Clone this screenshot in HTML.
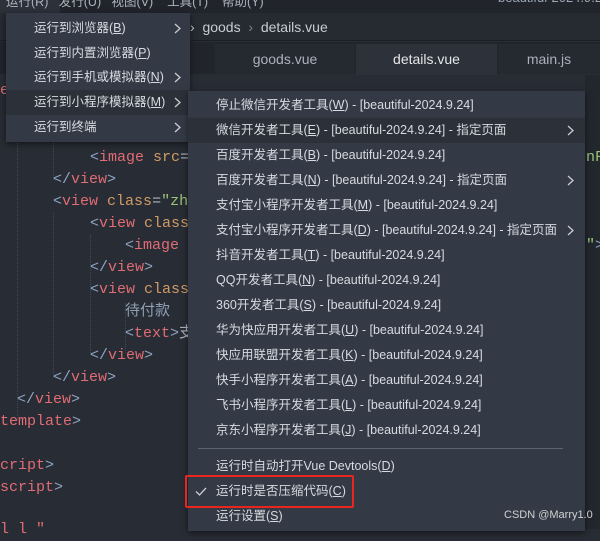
<!DOCTYPE html>
<html><head><meta charset="utf-8"><style>
*{margin:0;padding:0;box-sizing:border-box}
body{width:600px;height:529px;overflow:hidden;background:#282c34;position:relative;font-family:"Liberation Sans","Noto Sans CJK SC",sans-serif;}
.abs{position:absolute;white-space:nowrap}
.code{font-family:"Liberation Mono","Noto Sans CJK SC",monospace;font-size:15px;line-height:22px}
.t{color:#e06c75}.b{color:#8ea5c4}.a{color:#d19a66}.s{color:#98c379}.w{color:#abb2bf}
.menu{background:#343a45;box-shadow:0 2px 6px rgba(0,0,0,.5);color:#d7dae0;font-size:12.5px}
.it{position:absolute;left:0;right:0;height:25px;line-height:25px}
.it.h{background:#2b3039}
.arr{position:absolute;top:7px;width:7px;height:11px}
u{text-decoration:underline}
.guide{position:absolute;border-left:1px dotted #444a55;width:0}
</style></head><body>
<svg width="0" height="0" style="position:absolute"><defs><symbol id="chev" viewBox="0 0 7 11"><path d="M1 1 L6 5.5 L1 10" fill="none" stroke="#c8ccd4" stroke-width="1.3"/></symbol></defs></svg>
<!-- top bar -->
<div class="abs" style="left:0;top:0;width:600px;height:13px;background:#21252b"></div>
<div class="abs" style="left:0;top:0;width:60px;height:13px;background:#2c313a"></div>
<div class="abs" style="left:6px;top:-9px;font-size:12.5px;color:#abb2bf">运行(R)&nbsp;&nbsp;&nbsp;发行(U)&nbsp;&nbsp;&nbsp;视图(V)&nbsp;&nbsp;&nbsp;&nbsp;工具(T)&nbsp;&nbsp;&nbsp;&nbsp;帮助(Y)</div>
<div class="abs" style="left:498px;top:-10px;font-size:13px;color:#9da5b4">beautiful-2024.9.24</div>
<!-- breadcrumb -->
<div class="abs" style="left:0;top:13px;width:600px;height:28px;background:#262a31;border-bottom:1px solid #1b1e23"></div>
<div class="abs" style="left:190px;top:19px;font-size:14px;color:#c8ccd4">›&nbsp;&nbsp;goods&nbsp;&nbsp;<span style="color:#7f848e">›</span>&nbsp;&nbsp;details.vue</div>
<!-- tabs -->
<div class="abs" style="left:0;top:42px;width:600px;height:32px;background:#21252b"></div>
<div class="abs" style="left:215px;top:44px;width:140px;height:30px;background:#252930;color:#abb2bf;font-size:14px;text-align:center;line-height:30px">goods.vue</div>
<div class="abs" style="left:356px;top:44px;width:141px;height:31px;background:#2c313a;color:#e6e6e6;font-size:14px;text-align:center;line-height:30px">details.vue</div>
<div class="abs" style="left:498px;top:44px;width:102px;height:30px;background:#252930;color:#abb2bf;font-size:14px;text-align:center;line-height:30px">main.js</div>
<!-- right strip -->
<div class="abs" style="left:585px;top:75px;width:15px;height:454px;background:#22262d"></div>
<!-- code -->
<div class="guide" style="left:17px;top:140px;height:280px"></div>
<div class="guide" style="left:53px;top:140px;height:40px"></div>
<div class="guide" style="left:53px;top:212px;height:165px"></div>
<div class="guide" style="left:90px;top:235px;height:120px"></div>
<div class="guide" style="left:125px;top:303px;height:50px"></div>
<div class="abs code" style="left:0;top:80px"><span class="t">e</span></div>
<div class="abs code" style="left:90px;top:147px"><span class="b">&lt;</span><span class="t">image</span> <span class="a">src</span><span class="w">=</span></div>
<div class="abs code" style="left:53px;top:169px"><span class="b">&lt;/</span><span class="t">view</span><span class="b">&gt;</span></div>
<div class="abs code" style="left:53px;top:191px"><span class="b">&lt;</span><span class="t">view</span> <span class="a">class</span><span class="w">=</span><span class="s">"zh</span></div>
<div class="abs code" style="left:90px;top:213px"><span class="b">&lt;</span><span class="t">view</span> <span class="a">class</span></div>
<div class="abs code" style="left:125px;top:235px"><span class="b">&lt;</span><span class="t">image</span></div>
<div class="abs code" style="left:90px;top:257px"><span class="b">&lt;/</span><span class="t">view</span><span class="b">&gt;</span></div>
<div class="abs code" style="left:90px;top:279px"><span class="b">&lt;</span><span class="t">view</span> <span class="a">class</span></div>
<div class="abs code" style="left:125px;top:301px;color:#8ea0b4">待付款</div>
<div class="abs code" style="left:125px;top:323px"><span class="b">&lt;</span><span class="t">text</span><span class="b">&gt;</span><span class="w">支</span></div>
<div class="abs code" style="left:90px;top:345px"><span class="b">&lt;/</span><span class="t">view</span><span class="b">&gt;</span></div>
<div class="abs code" style="left:53px;top:367px"><span class="b">&lt;/</span><span class="t">view</span><span class="b">&gt;</span></div>
<div class="abs code" style="left:17px;top:389px"><span class="b">&lt;/</span><span class="t">view</span><span class="b">&gt;</span></div>
<div class="abs code" style="left:0;top:411px"><span class="t">template</span><span class="b">&gt;</span></div>
<div class="abs code" style="left:0;top:455px"><span class="t">cript</span><span class="b">&gt;</span></div>
<div class="abs code" style="left:0;top:477px"><span class="t">script</span><span class="b">&gt;</span></div>
<div class="abs code" style="left:0;top:519px"><span class="t">  l    l    "</span></div>
<div class="abs code" style="left:586px;top:235px"><span class="s">"</span><span class="b">&gt;</span></div>
<div class="abs code" style="left:586px;top:147px"><span class="s">nF</span></div>
<!-- main menu -->
<div class="abs menu" style="left:6px;top:13px;width:184px;height:129px">
 <div class="it" style="top:3px"><span style="position:absolute;left:28px">运行到浏览器(<u>B</u>)</span><svg class="arr" style="left:168px"><use href="#chev"/></svg></div>
 <div class="it" style="top:28px"><span style="position:absolute;left:28px">运行到内置浏览器(<u>P</u>)</span></div>
 <div class="it" style="top:52px"><span style="position:absolute;left:28px">运行到手机或模拟器(<u>N</u>)</span><svg class="arr" style="left:168px"><use href="#chev"/></svg></div>
 <div class="it h" style="top:77px"><span style="position:absolute;left:28px">运行到小程序模拟器(<u>M</u>)</span><svg class="arr" style="left:168px"><use href="#chev"/></svg></div>
 <div class="it" style="top:102px"><span style="position:absolute;left:28px">运行到终端</span><svg class="arr" style="left:168px"><use href="#chev"/></svg></div>
</div>
<!-- submenu -->
<div class="abs menu" style="left:188px;top:91px;width:397px;height:440px">
 <div class="it" style="top:2px"><span style="position:absolute;left:28px">停止微信开发者工具(<u>W</u>) - [beautiful-2024.9.24]</span></div>
 <div class="it h" style="top:27px"><span style="position:absolute;left:28px">微信开发者工具(<u>E</u>) - [beautiful-2024.9.24] - 指定页面</span><svg class="arr" style="left:379px"><use href="#chev"/></svg></div>
 <div class="it" style="top:52px"><span style="position:absolute;left:28px">百度开发者工具(<u>B</u>) - [beautiful-2024.9.24]</span></div>
 <div class="it" style="top:77px"><span style="position:absolute;left:28px">百度开发者工具(<u>N</u>) - [beautiful-2024.9.24] - 指定页面</span><svg class="arr" style="left:379px"><use href="#chev"/></svg></div>
 <div class="it" style="top:102px"><span style="position:absolute;left:28px">支付宝小程序开发者工具(<u>M</u>) - [beautiful-2024.9.24]</span></div>
 <div class="it" style="top:127px"><span style="position:absolute;left:28px">支付宝小程序开发者工具(<u>D</u>) - [beautiful-2024.9.24] - 指定页面</span><svg class="arr" style="left:379px"><use href="#chev"/></svg></div>
 <div class="it" style="top:152px"><span style="position:absolute;left:28px">抖音开发者工具(<u>T</u>) - [beautiful-2024.9.24]</span></div>
 <div class="it" style="top:177px"><span style="position:absolute;left:28px">QQ开发者工具(<u>N</u>) - [beautiful-2024.9.24]</span></div>
 <div class="it" style="top:202px"><span style="position:absolute;left:28px">360开发者工具(<u>S</u>) - [beautiful-2024.9.24]</span></div>
 <div class="it" style="top:227px"><span style="position:absolute;left:28px">华为快应用开发者工具(<u>U</u>) - [beautiful-2024.9.24]</span></div>
 <div class="it" style="top:252px"><span style="position:absolute;left:28px">快应用联盟开发者工具(<u>K</u>) - [beautiful-2024.9.24]</span></div>
 <div class="it" style="top:277px"><span style="position:absolute;left:28px">快手小程序开发者工具(<u>A</u>) - [beautiful-2024.9.24]</span></div>
 <div class="it" style="top:302px"><span style="position:absolute;left:28px">飞书小程序开发者工具(<u>L</u>) - [beautiful-2024.9.24]</span></div>
 <div class="it" style="top:327px"><span style="position:absolute;left:28px">京东小程序开发者工具(<u>J</u>) - [beautiful-2024.9.24]</span></div>
 <div style="position:absolute;left:10px;width:365px;top:357px;height:1px;background:#5f6570"></div>
 <div class="it" style="top:363px"><span style="position:absolute;left:28px">运行时自动打开Vue Devtools(<u>D</u>)</span></div>
 <div class="it" style="top:388px"><svg style="position:absolute;left:7px;top:8px" width="12" height="9" viewBox="0 0 12 9"><path d="M1 4.5 L4.5 8 L11 1" fill="none" stroke="#c8ccd4" stroke-width="1.3"/></svg><span style="position:absolute;left:28px">运行时是否压缩代码(<u>C</u>)</span></div>
 <div class="it" style="top:413px"><span style="position:absolute;left:28px">运行设置(<u>S</u>)</span></div>
</div>
<div class="abs" style="left:185px;top:475px;width:169px;height:33px;border:2px solid #e8261e;border-radius:2px"></div>
<div class="abs" style="left:504px;top:509px;font-size:11px;color:#d0d0d0">CSDN @Marry1.0</div>
</body></html>
